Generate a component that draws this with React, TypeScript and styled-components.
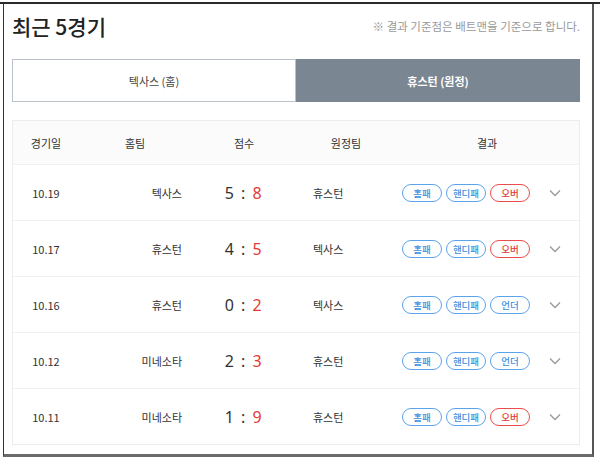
import styled, { createGlobalStyle } from "styled-components";

const GlobalStyle = createGlobalStyle`
  body {
    margin: 0;
    background: #fff;
    font-family: "Noto Sans CJK KR", "Noto Sans", sans-serif;
    color: #333;
  }
`;

const Page = styled.div`
  border-top: 2px solid #2a2a2a;
  margin-top: 2px;
  width: 600px;
`;

const Frame = styled.div`
  margin-left: 3px;
  width: 591px;
  height: 453px;
  border-left: 1px solid #333;
  border-right: 2px solid #555;
  border-bottom: 3px solid #6a6a6a;
  padding: 0 12px 0 8px;
  box-sizing: border-box;
`;

const Header = styled.header`
  display: flex;
  justify-content: space-between;
  align-items: center;
  height: 43px;
`;

const Title = styled.h1`
  margin: 0;
  font-size: 21px;
  font-weight: 500;
  color: #222;
`;

const Note = styled.span`
  font-size: 11.5px;
  color: #9a9a9a;
`;

const Tabs = styled.div`
  display: grid;
  grid-template-columns: 1fr 1fr;
  margin-top: 12px;
  height: 43px;
`;

const Tab = styled.button<{ $active?: boolean }>`
  font-family: inherit;
  font-size: 11px;
  border: 1px solid ${(p) => (p.$active ? "#7b8693" : "#bcc2ca")};
  background: ${(p) => (p.$active ? "#7b8693" : "#fff")};
  color: ${(p) => (p.$active ? "#fff" : "#444")};
  font-weight: ${(p) => (p.$active ? 700 : 400)};
  padding: 0;
`;

const Table = styled.div`
  margin-top: 18px;
  border: 1px solid #ececec;
`;

const Row = styled.div<{ $head?: boolean }>`
  display: grid;
  grid-template-columns: 66px 112px 106px 98px 1fr;
  align-items: center;
  height: ${(p) => (p.$head ? "43px" : "55px")};
  background: ${(p) => (p.$head ? "#fbfbfb" : "#fff")};
  border-top: ${(p) => (p.$head ? "none" : "1px solid #f0f0f0")};
  font-size: 11px;
  color: #333;
`;

const Cell = styled.div<{ $align?: "left" | "right" | "center" }>`
  text-align: ${(p) => p.$align || "center"};
  padding: ${(p) =>
    p.$align === "right" ? "0 9px 0 0" : p.$align === "left" ? "0 0 0 16px" : "0"};
`;

const Score = styled.div`
  text-align: center;
  font-family: "Noto Sans", sans-serif;
  font-size: 16px;
  color: #333;
  letter-spacing: 1.5px;
`;

const Lost = styled.span`
  color: #e53935;
`;

const Result = styled.div`
  display: flex;
  align-items: center;
  padding-left: 7px;
  gap: 4px;
`;

const Badge = styled.span<{ $red?: boolean }>`
  display: inline-flex;
  align-items: center;
  justify-content: center;
  width: 40px;
  height: 18px;
  box-sizing: border-box;
  border-radius: 9px;
  border: 1.5px solid ${(p) => (p.$red ? "#ec4c4c" : "#5aa4ec")};
  color: ${(p) => (p.$red ? "#e53935" : "#3b8fe0")};
  font-size: 9.5px;
  font-weight: 500;
`;

const Chevron = styled.svg`
  margin-left: 15px;
`;

const games = [
  { date: "10.19", home: "텍사스", away: "휴스턴", a: 5, b: 8, ou: "오버" },
  { date: "10.17", home: "휴스턴", away: "텍사스", a: 4, b: 5, ou: "오버" },
  { date: "10.16", home: "휴스턴", away: "텍사스", a: 0, b: 2, ou: "언더" },
  { date: "10.12", home: "미네소타", away: "휴스턴", a: 2, b: 3, ou: "언더" },
  { date: "10.11", home: "미네소타", away: "휴스턴", a: 1, b: 9, ou: "오버" },
];

function App() {
  return (
    <Page>
      <GlobalStyle />
      <Frame>
        <Header>
          <Title>최근 5경기</Title>
          <Note>※ 결과 기준점은 배트맨을 기준으로 합니다.</Note>
        </Header>
        <Tabs>
          <Tab>텍사스 (홈)</Tab>
          <Tab $active>휴스턴 (원정)</Tab>
        </Tabs>
        <Table>
          <Row $head>
            <Cell>경기일</Cell>
            <Cell>홈팀</Cell>
            <Cell>점수</Cell>
            <Cell>원정팀</Cell>
            <Cell>결과</Cell>
          </Row>
          {games.map((g) => (
            <Row key={g.date}>
              <Cell>{g.date}</Cell>
              <Cell $align="right">{g.home}</Cell>
              <Score>
                {g.a} : <Lost>{g.b}</Lost>
              </Score>
              <Cell $align="left">{g.away}</Cell>
              <Result>
                <Badge>홈패</Badge>
                <Badge>핸디패</Badge>
                <Badge $red={g.ou === "오버"}>{g.ou}</Badge>
                <Chevron width="12" height="8" viewBox="0 0 12 8">
                  <path d="M1 1.5 L6 6.5 L11 1.5" fill="none" stroke="#999" strokeWidth="1.3" />
                </Chevron>
              </Result>
            </Row>
          ))}
        </Table>
      </Frame>
    </Page>
  );
}

export default App;
